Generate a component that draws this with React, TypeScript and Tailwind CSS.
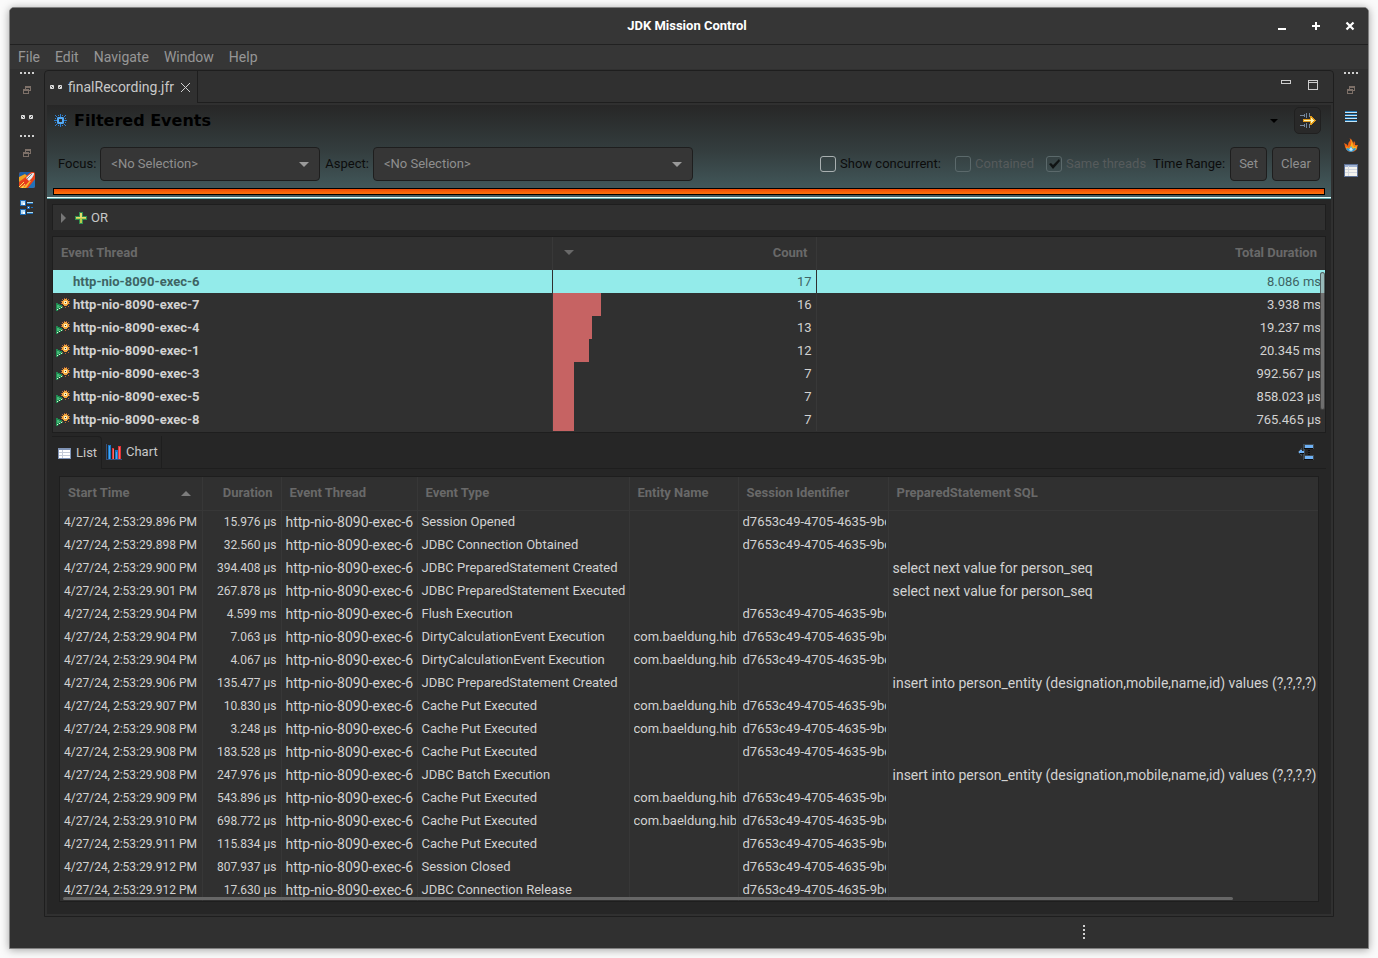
import type { ReactNode } from "react";

interface ThreadRow {
  name: string;
  count: number;
  duration: string;
}

interface EventRow {
  start: string;
  duration: string;
  type: string;
  entity?: boolean;
  session?: boolean;
  sql?: string;
}

const TOTAL_EVENTS = 86;
const SESSION_ID = "d7653c49-4705-4635-9bd";
const SELECT_SQL = "select next value for person_seq";
const INSERT_SQL = "insert into person_entity (designation,mobile,name,id) values (?,?,?,?)";

const threads: ThreadRow[] = [
  { name: "http-nio-8090-exec-6", count: 17, duration: "8.086 ms" },
  { name: "http-nio-8090-exec-7", count: 16, duration: "3.938 ms" },
  { name: "http-nio-8090-exec-4", count: 13, duration: "19.237 ms" },
  { name: "http-nio-8090-exec-1", count: 12, duration: "20.345 ms" },
  { name: "http-nio-8090-exec-3", count: 7, duration: "992.567 µs" },
  { name: "http-nio-8090-exec-5", count: 7, duration: "858.023 µs" },
  { name: "http-nio-8090-exec-8", count: 7, duration: "765.465 µs" },
];

const events: EventRow[] = [
  { start: "896", duration: "15.976 µs", type: "Session Opened", session: true },
  { start: "898", duration: "32.560 µs", type: "JDBC Connection Obtained", session: true },
  { start: "900", duration: "394.408 µs", type: "JDBC PreparedStatement Created", sql: SELECT_SQL },
  { start: "901", duration: "267.878 µs", type: "JDBC PreparedStatement Executed", sql: SELECT_SQL },
  { start: "904", duration: "4.599 ms", type: "Flush Execution", session: true },
  { start: "904", duration: "7.063 µs", type: "DirtyCalculationEvent Execution", entity: true, session: true },
  { start: "904", duration: "4.067 µs", type: "DirtyCalculationEvent Execution", entity: true, session: true },
  { start: "906", duration: "135.477 µs", type: "JDBC PreparedStatement Created", sql: INSERT_SQL },
  { start: "907", duration: "10.830 µs", type: "Cache Put Executed", entity: true, session: true },
  { start: "908", duration: "3.248 µs", type: "Cache Put Executed", entity: true, session: true },
  { start: "908", duration: "183.528 µs", type: "Cache Put Executed", session: true },
  { start: "908", duration: "247.976 µs", type: "JDBC Batch Execution", sql: INSERT_SQL },
  { start: "909", duration: "543.896 µs", type: "Cache Put Executed", entity: true, session: true },
  { start: "910", duration: "698.772 µs", type: "Cache Put Executed", entity: true, session: true },
  { start: "911", duration: "115.834 µs", type: "Cache Put Executed", session: true },
  { start: "912", duration: "807.937 µs", type: "Session Closed", session: true },
  { start: "912", duration: "17.630 µs", type: "JDBC Connection Release", session: true },
];

/* ---------- icons ---------- */

function Pixels({ w, h, children }: { w: number; h: number; children: ReactNode }) {
  return (
    <svg width={w} height={h} viewBox={`0 0 ${w} ${h}`} shapeRendering="crispEdges" className="block shrink-0">
      {children}
    </svg>
  );
}

function Grip() {
  return (
    <Pixels w={14} h={2}>
      <path d="M0 0h2v2H0zM4 0h2v2H4zM8 0h2v2H8zM12 0h2v2h-2z" fill="#d0d0d0" />
    </Pixels>
  );
}

function RestoreIcon() {
  return (
    <Pixels w={8} h={8}>
      <path d="M2.500 3V.5h5v4H6M2 1.500h6" fill="none" stroke="#7d7068" />
      <path d="M.5 3.500h5v4h-5zM0 4.500h6" fill="none" stroke="#7d7068" />
    </Pixels>
  );
}

function RecordingIcon() {
  return (
    <svg width="12" height="4" viewBox="0 0 12 4" className="block shrink-0">
      <rect width="4" height="4" rx="1" fill="#dedede" />
      <rect x="8" width="4" height="4" rx="1" fill="#dedede" />
      <path d="M1 1l2 2M9 3l2-2" stroke="#555" />
    </svg>
  );
}

function RocketIcon() {
  return (
    <svg width="16" height="16" viewBox="0 0 16 16" className="block">
      <rect width="16" height="16" rx="2" fill="#e8431b" />
      <path d="M0 2Q0 0 2 0h10L7 4 0 10z" fill="#1d5ea6" />
      <path d="M0 5l6-3 2 2-8 6z" fill="#f4a321" />
      <path d="M1 16L9 8l3 1-5 7z" fill="#f8b52c" />
      <path d="M9 16l7-9v7q0 2-2 2z" fill="#2172b9" />
      <path d="M2 12L10 3q3-2.500 5-2 .5 2-2 5l-8 9z" fill="#e63a1e" />
      <path d="M7 6l3-3q3-2.500 5-2 .5 2-2 5l-3 3z" fill="#e9ecef" />
      <path d="M8 7l5-5" stroke="#7e8b96" />
      <path d="M0 15l5-5M3 16l3-4" stroke="#ffe15a" />
    </svg>
  );
}

function OutlineIcon() {
  return (
    <Pixels w={14} h={15}>
      <path d="M0 0h6v6H0zM0 9h6v6H0z" fill="#1c6bb5" />
      <path d="M1 1h4v4H1zM1 10h4v4H1z" fill="#b8dcf6" />
      <path d="M3 3h2v2H3zM3 12h2v2H3z" fill="#fff" />
      <path d="M7 2h6v1H7zM7 12h6v1H7z" fill="#a8d8f0" />
      <path d="M7 3h6v1H7zM7 13h6v1H7zM7 6h3v3H7zM11 7h2v1h-2z" fill="#1c6bb5" />
      <path d="M8 7h1v1H8z" fill="#fff" />
    </Pixels>
  );
}

function LinesIcon() {
  return (
    <Pixels w={12} h={11}>
      <path d="M0 0h12v1H0zM0 3h12v1H0zM0 6h12v1H0zM0 9h12v1H0z" fill="#2277b5" />
      <path d="M0 1h12v1H0zM0 4h12v1H0zM0 7h12v1H0zM0 10h12v1H0z" fill="#c5e6f7" />
    </Pixels>
  );
}

function FlameIcon() {
  return (
    <svg width="14" height="14" viewBox="0 0 14 14" className="block">
      <path d="M1 9Q1 7 0 5q3 1 4 3 0-4 2-5 .5-2-.5-3Q9 2 9 6l1-3q2 2 1 4l3 0q-1 2-1 4-2 3-6 3t-6-5z" fill="#ee6415" />
      <path d="M7 1q1 3 0 6l-2 3-3-1 1 3 9 0 1-4-3 1q1-2 0-3l-1 3Q9 4 7 1z" fill="#fbb321" />
      <path d="M2 11q2-2 3 0l2-3 2 3q2-2 3 0-2 3-5 3t-5-3z" fill="#2f9bd9" />
      <path d="M5 12l2-3 2 3-2 1z" fill="#c9ecfa" />
    </svg>
  );
}

function TableIcon() {
  return (
    <Pixels w={14} h={13}>
      <path d="M0 0h14v13H0z" fill="#5d7196" />
      <path d="M1 1h12v2H1z" fill="#9fb2d3" />
      <path d="M1 3h12v9H1z" fill="#f4f3ee" />
      <path d="M4 2h1v10H4zM1 5h12v1H1zM1 8h12v1H1z" fill="#d3d7de" />
    </Pixels>
  );
}

function BurstIcon() {
  return (
    <Pixels w={13} h={13}>
      <path
        d="M6 0h1v3H6zM6 10h1v3H6zM0 6h3v1H0zM10 6h3v1h-3zM3 3h2v2H3zM8 3h2v2H8zM3 8h2v2H3zM8 8h2v2H8zM1 1h1v1H1zM11 1h1v1h-1zM1 11h1v1H1zM11 11h1v1h-1zM4 1h1v1H4zM8 1h1v1H8zM4 11h1v1H4zM8 11h1v1H8zM1 4h1v1H1zM1 8h1v1H1zM11 4h1v1h-1zM11 8h1v1h-1zM2 2h1v1H2zM10 2h1v1h-1zM2 10h1v1H2zM10 10h1v1h-1z"
        fill="#2f7fce"
      />
      <path d="M4 3h5v1H4zM4 9h5v1H4zM3 4h2v5H3zM8 4h2v5H8zM4 4h5v1H4zM4 8h5v1H4z" fill="#55a9f2" />
    </Pixels>
  );
}

function ThreadIcon() {
  return (
    <Pixels w={14} h={13}>
      <path d="M0 5h2v1h2v1h2v1h1v2H5v1H3v1H2v1H0z" fill="#1f8a50" />
      <path d="M1 7h2v1h2v1H3v1H1z" fill="#45b877" />
      <path d="M1 11h1v1H1zM3 10h1v1H3zM5 9h1v1H5z" fill="#dff2d8" />
      <path d="M8 0h1v1H8zM10 0h1v1h-1zM6 1h1v1H6zM12 1h1v1h-1zM5 3h1v1H5zM13 3h1v1h-1zM5 5h1v1H5zM13 5h1v1h-1zM6 8h1v1H6zM12 8h1v1h-1zM9 9h1v1H9z" fill="#b5643c" />
      <path d="M8 1h3v1h1v1h1v3h-1v1h-1v1H8V7H7V6H6V3h1V2h1z" fill="#f2a43c" />
      <path d="M8 3h3v3H8z" fill="#fff0b8" />
      <path d="M9 4h1v1H9z" fill="#3a3030" />
    </Pixels>
  );
}

function PlusIcon() {
  return (
    <Pixels w={12} h={12}>
      <path d="M4 0h4v4h4v4H8v4H4V8H0V4h4z" fill="#2f8f50" />
      <path d="M5 1h2v4h4v2H7v4H5V7H1V5h4z" fill="#b9c94c" />
      <path d="M5 1h2v4h4v1H1V5h4z" fill="#e6dc6e" />
    </Pixels>
  );
}

function ListIcon() {
  return (
    <Pixels w={13} h={11}>
      <path d="M0 0h13v11H0z" fill="#7f93b5" />
      <path d="M1 2h11v8H1z" fill="#fff" />
      <path d="M4 2h1v8H4zM1 4h11v1H1zM1 7h11v1H1z" fill="#c4cbd8" />
    </Pixels>
  );
}

function ChartIcon() {
  return (
    <Pixels w={16} h={16}>
      <path d="M0 0h1v15h15v1H0z" fill="#36507c" />
      <path d="M2 1h3v14H2zM9 6h3v9H9z" fill="#1976c8" />
      <path d="M3 2h1v13H3zM10 8h1v7h-1z" fill="#45a9f5" />
      <path d="M6 4h2v11H6zM12 2h3v13h-3z" fill="#e03236" />
      <path d="M7 5h1v10H7zM13 3h1v12h-1z" fill="#f57070" />
    </Pixels>
  );
}

function PinRangeIcon() {
  return (
    <Pixels w={16} h={16}>
      <path
        d="M0 2h5v1H0zM0 12h5v1H0zM4 1h1v3H4zM4 11h1v3H4zM6 0h1v5H6zM6 10h1v5H6zM9 0h1v4H9zM9 11h1v4H9z"
        fill="#74869a"
      />
      <path d="M3 6h7V3h2v1h1v1h1v1h1v1h1v1h-1v1h-1v1h-1v1h-1v1h-2V9H3z" fill="#e09a1a" />
      <path d="M4 7h7V5h1v1h1v1h1v1h-1v1h-1v1h-1V8H4z" fill="#fff6b8" />
    </Pixels>
  );
}

function CollapseIcon() {
  return (
    <Pixels w={16} h={16}>
      <path d="M5 0h11v5H7v6h9v5H5zM0 7h1V6h1V5h1V4h1v8H3v-1H2v-1H1V9H0z" fill="#3f4b54" />
      <path d="M7 1h8v3H7zM7 12h8v3H7zM1 7h1V6h2v1h2v2H4v1H2V9H1z" fill="#6fb1f5" />
      <path d="M6 4h9v1H6zM6 15h9v1H6zM10 6h2v1h-2zM10 8h2v1h-2zM10 10h2v1h-2zM2 9h4v1H2z" fill="#0c0c0c" />
    </Pixels>
  );
}

function Triangle({ className, up = false }: { className: string; up?: boolean }) {
  return (
    <svg width="10" height="5" viewBox="0 0 10 5" className={className} fill="currentColor">
      <path d={up ? "M0 5L5 0l5 5z" : "M0 0h10L5 5z"} />
    </svg>
  );
}

/* ---------- pieces ---------- */

function Combo({ id, label, width }: { id: string; label: string; width: string }) {
  return (
    <div className="flex items-center gap-1">
      <label htmlFor={id} className="text-[13px] text-[#0c0c0c]">
        {label}
      </label>
      <div className={`relative ${width}`}>
        <select
          id={id}
          className="block h-[34px] w-full appearance-none rounded border border-[#1e1e1e] bg-[#363636] px-2.5 text-[13px] text-[#8f8f8f]"
        >
          <option>&lt;No Selection&gt;</option>
        </select>
        <Triangle className="pointer-events-none absolute top-[15px] right-[11px] text-[#9a9a9a]" />
      </div>
    </div>
  );
}

interface CheckProps {
  id: string;
  label: string;
  width: string;
  checked?: boolean;
  disabled?: boolean;
}

function Check({ id, label, width, checked, disabled }: CheckProps) {
  return (
    <div className="flex items-center gap-1">
      <span className="relative size-4">
        <input
          id={id}
          type="checkbox"
          defaultChecked={checked}
          disabled={disabled}
          className="peer block size-4 appearance-none rounded-[3px] border border-[#a9b0b1] disabled:border-[#5b696b]"
        />
        <svg viewBox="0 0 16 16" className="pointer-events-none absolute inset-0 hidden size-4 peer-checked:block">
          <path d="M3 8l2-1 2 2 6-6 1 2-7 8z" fill="#101414" />
        </svg>
      </span>
      <label htmlFor={id} className={`${width} ${disabled ? "text-[#565b5c]" : "text-[#0c0c0c]"}`}>
        {label}
      </label>
    </div>
  );
}

function IconButton({ label, children }: { label: string; children: ReactNode }) {
  return (
    <button type="button" aria-label={label} className="flex items-center justify-center">
      {children}
    </button>
  );
}

function ThreadTable() {
  return (
    <div className="relative h-[197px] overflow-hidden border border-[#1e1e1e] bg-[#303030]">
      <table className="w-full table-fixed border-collapse">
        <colgroup>
          <col className="w-[499px]" />
          <col className="w-[264px]" />
          <col />
        </colgroup>
        <thead>
          <tr className="h-[33px] text-[13px] text-[#696969]">
            <th className="border-r border-[#383838] px-2 pb-0.5 text-left">Event Thread</th>
            <th className="border-r border-[#383838] px-2 pb-0.5">
              <div className="flex items-center justify-between pl-[3px]">
                <Triangle className="text-[#696969]" />
                Count
              </div>
            </th>
            <th className="px-2 pb-0.5 text-right">Total Duration</th>
          </tr>
        </thead>
        <tbody>
          {threads.map((t, i) => {
            const selected = i === 0;
            return (
              <tr
                key={t.name}
                className={selected ? "h-[23px] bg-[#93ebea] text-[#3e6464]" : "h-[23px] text-[#d2d2d2]"}
              >
                <td className={selected ? "border-r border-[#303030] p-0" : "border-r border-[#383838] p-0"}>
                  <div className="flex items-center gap-[3px] pl-[3px]">
                    <span className="w-[14px]">{!selected && <ThreadIcon />}</span>
                    <span className="text-[13px] font-bold">{t.name}</span>
                  </div>
                </td>
                <td className={selected ? "border-r border-[#303030] p-0" : "border-r border-[#383838] p-0"}>
                  <div className="flex h-[23px] items-center justify-between">
                    <span
                      className="h-full bg-[#c66363]"
                      style={{ width: selected ? 0 : `${(t.count / TOTAL_EVENTS) * 100}%` }}
                    />
                    <span className="pr-1 text-[13px]">{t.count}</span>
                  </div>
                </td>
                <td className="p-0 pr-1 text-right text-[13px]">{t.duration}</td>
              </tr>
            );
          })}
        </tbody>
      </table>
      <div className="absolute top-[35px] right-0 h-[138px] w-[5px] rounded-full border border-[#252525]/60 bg-[#9a9a9a]/60" />
    </div>
  );
}

const headCell = "border-r border-b border-[#373737] px-2 text-left font-bold";
const bodyCell = "overflow-hidden border-r border-[#373737] px-1 whitespace-nowrap";

function EventTable() {
  return (
    <div className="relative grow overflow-hidden border border-[#1e1e1e] bg-[#303030]">
      <table className="w-full table-fixed border-collapse">
        <colgroup>
          <col className="w-[142px]" />
          <col className="w-[79px]" />
          <col className="w-[136px]" />
          <col className="w-[212px]" />
          <col className="w-[109px]" />
          <col className="w-[150px]" />
          <col />
        </colgroup>
        <thead>
          <tr className="h-[33px] text-[13px] text-[#696969]">
            <th className={headCell}>
              <div className="flex items-center justify-between pr-[3px]">
                Start Time
                <Triangle up className="text-[#7c7c7c]" />
              </div>
            </th>
            <th className="border-r border-b border-[#373737] px-2 text-right font-bold">Duration</th>
            <th className={headCell}>Event Thread</th>
            <th className={headCell}>Event Type</th>
            <th className={headCell}>Entity Name</th>
            <th className={headCell}>Session Identifier</th>
            <th className="border-b border-[#373737] px-2 text-left font-bold">PreparedStatement SQL</th>
          </tr>
        </thead>
        <tbody className="text-[13px] text-[#d2d2d2]">
          {events.map((e, i) => (
            <tr key={i} className="h-[23px]">
              <td className={`${bodyCell} text-[12px]`}>4/27/24, 2:53:29.{e.start} PM</td>
              <td className={`${bodyCell} text-right text-[12px]`}>{e.duration}</td>
              <td className={`${bodyCell} text-[14px]`}>http-nio-8090-exec-6</td>
              <td className="overflow-hidden border-r border-[#373737] pl-1 whitespace-nowrap">{e.type}</td>
              <td className="border-r border-[#373737] pr-0.5 pl-1 whitespace-nowrap">
                <div className="overflow-hidden">{e.entity && "com.baeldung.hib"}</div>
              </td>
              <td className="border-r border-[#373737] pr-0.5 pl-1 whitespace-nowrap">
                <div className="overflow-hidden">{e.session && SESSION_ID}</div>
              </td>
              <td className="overflow-hidden pl-1 text-[14px] whitespace-nowrap">{e.sql}</td>
            </tr>
          ))}
        </tbody>
      </table>
      <div className="absolute bottom-px left-[3px] h-[3px] w-[93%] rounded-full bg-[#666]" />
    </div>
  );
}

function Heading() {
  return (
    <header className="border-b border-[#63a9ab] bg-linear-to-b from-[#272727] via-[#343e3f] to-[#455e61]">
      <div className="flex h-[31px] items-center gap-[7px] pr-[10px] pl-[7px]">
        <BurstIcon />
        <h1 className="grow font-['DejaVu_Sans',sans-serif] text-[16px] leading-5 font-bold text-black">
          Filtered Events
        </h1>
        <button type="button" aria-label="Form menu" className="mr-[9px] text-black">
          <svg width="8" height="4" viewBox="0 0 8 4" fill="currentColor">
            <path d="M0 0h8L4 4z" />
          </svg>
        </button>
        <button
          type="button"
          aria-label="Show selection"
          className="flex size-[27px] items-center justify-center rounded-[5px] border border-[#202020] bg-[#292929]"
        >
          <PinRangeIcon />
        </button>
      </div>

      <div className="mt-[11px] flex items-center justify-between gap-2 pr-[11px] pl-[11px]">
        <div className="flex items-center gap-[5px]">
          <Combo id="focus" label="Focus:" width="w-[220px]" />
          <Combo id="aspect" label="Aspect:" width="w-[320px]" />
        </div>
        <div className="flex items-center gap-[5px] text-[13px]">
          <div className="flex items-center gap-[9px]">
            <Check id="concurrent" label="Show concurrent:" width="w-[106px]" />
            <Check id="contained" label="Contained" width="w-[62px]" disabled />
            <Check id="same" label="Same threads" width="w-[82px]" checked disabled />
          </div>
          <span className="text-[#0c0c0c]">Time Range:</span>
          <button type="button" className="h-[34px] rounded border border-[#1e1e1e] bg-[#363636] px-2 text-[#8f8f8f]">
            Set
          </button>
          <button type="button" className="h-[34px] rounded border border-[#1e1e1e] bg-[#363636] px-2 text-[#8f8f8f]">
            Clear
          </button>
        </div>
      </div>

      <div className="mx-1.5 mt-[7px] h-[7px] border border-black bg-linear-to-b from-[#ed4a06] to-[#fd720c]" />
      <div className="mt-0.5 h-px bg-[#e8ffff]" />
    </header>
  );
}

export default function App() {
  return (
    <div className="flex min-h-screen bg-[#fafafa] pt-[7px] pr-[9px] pb-[9px] pl-[9px] font-['Roboto',sans-serif] text-[14px] leading-5">
      <div className="flex min-w-0 grow flex-col overflow-hidden rounded-t-[5px] border border-[#808080] bg-[#303030] shadow-[0_1px_8px_rgba(0,0,0,0.35)]">
        {/* title bar */}
        <div className="grid h-[37px] grid-cols-[1fr_auto_1fr] items-center border-b border-[#212121] bg-[#363636] pr-1 text-white">
          <span />
          <span className="text-[13px] font-bold">JDK Mission Control</span>
          <div className="flex justify-end gap-[22px] pr-2">
            <IconButton label="Minimize">
              <Pixels w={12} h={12}>
                <path d="M2 8h8v2H2z" fill="#fff" />
              </Pixels>
            </IconButton>
            <IconButton label="Maximize">
              <Pixels w={12} h={12}>
                <path d="M5 2h2v3h3v2H7v3H5V7H2V5h3z" fill="#fff" />
              </Pixels>
            </IconButton>
            <IconButton label="Close">
              <svg width="12" height="12" viewBox="0 0 12 12">
                <path d="M2.500 2.500l7 7M9.500 2.500l-7 7" stroke="#fff" strokeWidth="2.200" />
              </svg>
            </IconButton>
          </div>
        </div>

        {/* menu bar */}
        <nav className="flex h-6 items-center gap-[15px] bg-[#363636] pl-2 text-[14px] text-[#969696]">
          <a href="#file">File</a>
          <a href="#edit">Edit</a>
          <a href="#navigate">Navigate</a>
          <a href="#window">Window</a>
          <a href="#help">Help</a>
        </nav>

        <div className="flex grow pt-px">
          <aside className="flex w-[34px] shrink-0 flex-col items-center pt-0.5">
            <Grip />
            <div className="mt-3">
              <RestoreIcon />
            </div>
            <div className="mt-[21px]">
              <RecordingIcon />
            </div>
            <div className="mt-4">
              <Grip />
            </div>
            <div className="mt-3">
              <RestoreIcon />
            </div>
            <div className="mt-[15px]">
              <RocketIcon />
            </div>
            <div className="mt-3">
              <OutlineIcon />
            </div>
          </aside>

          {/* editor */}
          <main className="flex min-w-0 grow flex-col rounded-t border border-[#1e1e1e] px-0.5 pb-0.5">
            <div className="-mx-0.5 mb-0.5 flex h-8 items-stretch">
              <div className="flex w-[153px] items-center gap-1.5 border-r border-[#1e1e1e] pl-[5px] text-[14px] text-[#c8c8c8]">
                <RecordingIcon />
                finalRecording.jfr
                <IconButton label="Close tab">
                  <svg width="9" height="9" viewBox="0 0 9 9" className="ml-px">
                    <path d="M0 0l9 9M9 0L0 9" stroke="#d0d0d0" />
                  </svg>
                </IconButton>
              </div>
              <div className="flex grow items-start justify-end gap-[17px] border-b border-[#1e1e1e] pt-[9px] pr-[15px]">
                <IconButton label="Minimize view">
                  <Pixels w={10} h={4}>
                    <path d="M.5.5h9v3h-9z" fill="none" stroke="#ccc" />
                  </Pixels>
                </IconButton>
                <IconButton label="Maximize view">
                  <Pixels w={10} h={10}>
                    <path d="M.5.5h9v9h-9zM1 2.500h8" fill="none" stroke="#ccc" />
                  </Pixels>
                </IconButton>
              </div>
            </div>

            <div className="flex grow flex-col bg-[#262626]">
              <Heading />
              <div className="flex grow flex-col px-[5px] pt-[5px]">
                <div className="flex h-[26px] items-center border border-b-0 border-[#1e1e1e] bg-[#303030] pl-2 text-[13px] text-[#c8c8c8]">
                  <svg width="5" height="10" viewBox="0 0 5 10" className="mr-[9px]">
                    <path d="M0 0l5 5-5 5z" fill="#777" />
                  </svg>
                  <PlusIcon />
                  <span className="ml-1">OR</span>
                </div>
                <div className="mt-1.5">
                  <ThreadTable />
                </div>

                <div className="mt-[3px] flex h-[33px] text-[13px] text-[#c8c8c8]" role="tablist">
                  <button
                    type="button"
                    role="tab"
                    aria-selected="true"
                    className="flex w-[50px] items-center gap-[5px] rounded-tr border-t border-r border-[#1e1e1e] pl-1.5"
                  >
                    <ListIcon />
                    List
                  </button>
                  <button
                    type="button"
                    role="tab"
                    aria-selected="false"
                    className="flex w-[60px] items-center gap-1 border-r border-b border-[#1e1e1e] pl-1"
                  >
                    <ChartIcon />
                    Chart
                  </button>
                  <div className="flex grow items-center justify-end border-b border-[#1e1e1e] pr-3">
                    <IconButton label="Collapse">
                      <CollapseIcon />
                    </IconButton>
                  </div>
                </div>

                <div className="mx-[7px] mt-[7px] mb-3 flex grow flex-col">
                  <EventTable />
                </div>
              </div>
            </div>
          </main>

          <aside className="flex w-[34px] shrink-0 flex-col items-center pt-0.5">
            <Grip />
            <div className="mt-3">
              <RestoreIcon />
            </div>
            <div className="mt-[17px]">
              <LinesIcon />
            </div>
            <div className="mt-4">
              <FlameIcon />
            </div>
            <div className="mt-3">
              <TableIcon />
            </div>
          </aside>
        </div>

        {/* status line */}
        <footer className="flex h-[31px] items-center justify-end pr-[283px] pb-0.5">
          <Pixels w={2} h={14}>
            <path d="M0 0h2v2H0zM0 4h2v2H0zM0 8h2v2H0zM0 12h2v2H0z" fill="#d0d0d0" />
          </Pixels>
        </footer>
      </div>
    </div>
  );
}
